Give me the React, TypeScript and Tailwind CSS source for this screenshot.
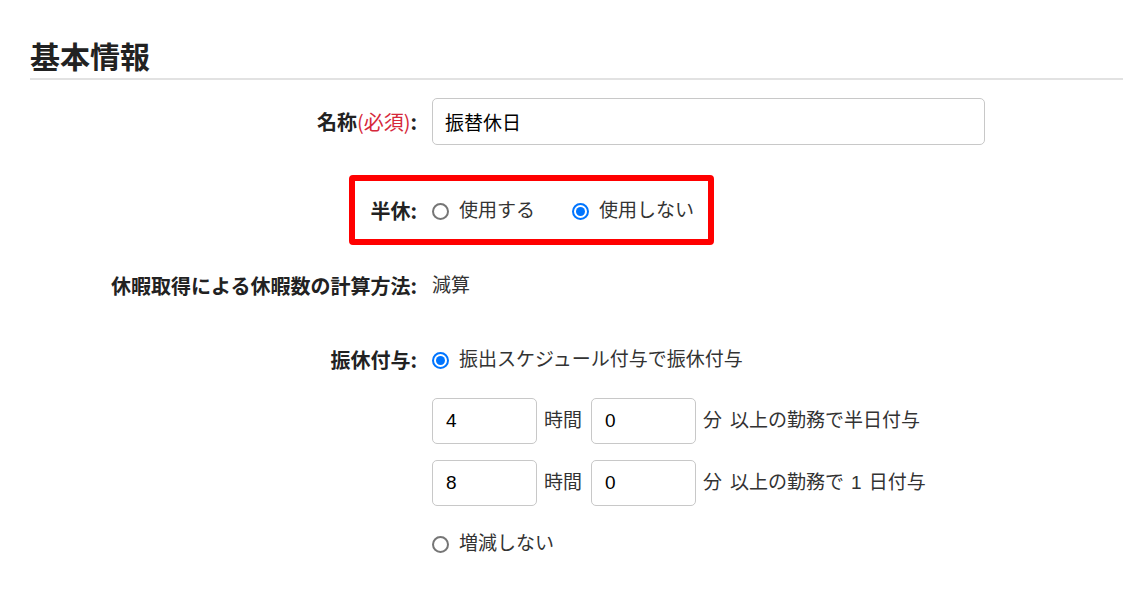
import type { ReactNode } from 'react'

const font = { fontFamily: '"Liberation Sans", "Noto Sans CJK JP", sans-serif' }
const cjk = { fontFamily: '"Noto Sans CJK JP", sans-serif' }

function Row({ label, children, className = '' }: { label: ReactNode; children?: ReactNode; className?: string }) {
  return (
    <div className={`relative grid grid-cols-[388px_1fr] gap-x-[14px] items-center ${className}`}>
      <div className="text-right font-bold text-[20px] text-[#222] pr-[1px]" style={cjk}>
        {label}
      </div>
      <div className="flex items-center">{children}</div>
    </div>
  )
}

function Radio({ checked, label }: { checked?: boolean; label: string }) {
  return (
    <label className="flex items-center">
      {checked ? (
        <span className="shrink-0 box-border w-[17px] h-[17px] rounded-full border-2 border-[#0075ff] bg-white flex items-center justify-center">
          <span className="w-[9px] h-[9px] rounded-full bg-[#0075ff]" />
        </span>
      ) : (
        <span className="shrink-0 box-border w-[17px] h-[17px] rounded-full border-2 border-[#767676] bg-white" />
      )}
      <span className="ml-[10px]">{label}</span>
    </label>
  )
}

function NumInput({ value }: { value: string }) {
  return (
    <input
      defaultValue={value}
      className="w-[105px] h-[46px] rounded-[5px] border border-[#c8c8c8] px-[13px] text-[19px] text-black outline-none"
    />
  )
}

export default function App() {
  return (
    <div className="min-h-[593px] bg-white text-[19px] text-[#333]" style={font}>
      <div className="pl-[30px] pt-[38px]">
        <h2
          className="text-[30px] font-bold leading-[34px] pb-[6px] border-b-2 border-[#e2e2e2] text-[#222]"
          style={cjk}
        >
          基本情報
        </h2>

        <Row
          className="mt-[18px] h-[47px]"
          label={
            <>
              名称<span className="font-normal text-[#d6283a]">(必須)</span>:
            </>
          }
        >
          <input
            defaultValue="振替休日"
            className="w-[553px] h-[47px] rounded-[5px] border border-[#c8c8c8] px-[12px] text-[19px] text-black outline-none"
          />
        </Row>

        <Row className="mt-[48px] h-[36px]" label="半休:">
          <Radio label="使用する" />
          <div className="w-[37px]" />
          <Radio label="使用しない" checked />
          <div className="absolute left-[319px] top-[-18px] w-[365px] h-[70px] border-[6px] border-[#ff0000] rounded-[4px] pointer-events-none" />
        </Row>

        <Row className="mt-[39px] h-[36px]" label="休暇取得による休暇数の計算方法:">
          <span>減算</span>
        </Row>

        <Row className="mt-[38px] h-[36px]" label="振休付与:">
          <Radio label="振出スケジュール付与で振休付与" checked />
        </Row>

        <Row className="mt-[20px] h-[46px]" label="">
          <NumInput value="4" />
          <span className="ml-[7px] mr-[9px]">時間</span>
          <NumInput value="0" />
          <span className="ml-[7px]">
            分<span className="ml-[8px]">以上の勤務で半日付与</span>
          </span>
        </Row>

        <Row className="mt-[16px] h-[46px]" label="">
          <NumInput value="8" />
          <span className="ml-[7px] mr-[9px]">時間</span>
          <NumInput value="0" />
          <span className="ml-[7px]">
            分<span className="ml-[8px]">以上の勤務で</span>
            <span className="mx-[7px]">1</span>日付与
          </span>
        </Row>

        <Row className="mt-[20px] h-[36px]" label="">
          <Radio label="増減しない" />
        </Row>
      </div>
    </div>
  )
}
